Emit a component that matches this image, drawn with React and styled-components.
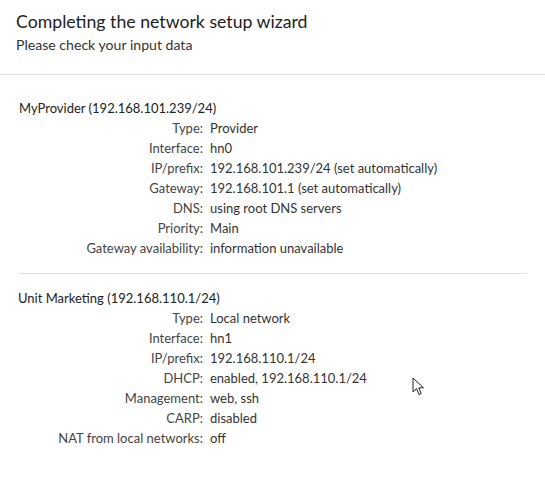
import React from "react";
import styled, { createGlobalStyle } from "styled-components";

const GlobalStyle = createGlobalStyle`
  html, body {
    margin: 0;
    padding: 0;
    background: #fff;
  }
  body {
    font-family: Lato, "Open Sans", sans-serif;
    color: #333;
  }
`;

const Page = styled.div`
  position: relative;
  width: 545px;
  height: 488px;
  overflow: hidden;
  background: #fff;
`;

const Header = styled.div`
  padding: 9px 16px 19px;
  border-bottom: 1px solid #e3e3e3;
`;

const Title = styled.h1`
  margin: 0;
  font-family: Lato, sans-serif;
  font-weight: 400;
  font-size: 17.7px;
  line-height: 26px;
  color: #222;
`;

const Subtitle = styled.div`
  font-size: 14.1px;
  line-height: 20px;
  color: #333;
`;

const Body = styled.div`
  padding: 23px 18px 0;
`;

const Section = styled.div`
  padding-bottom: 15px;
  & + & {
    border-top: 1px solid #e3e3e3;
    padding-top: 14px;
  }
`;

const SectionTitle = styled.div`
  font-size: 13px;
  line-height: 20px;
  color: #222;
  padding-left: ${(p) => p.$indent || 0}px;
`;

const Grid = styled.dl`
  margin: 0;
  display: grid;
  grid-template-columns: 185px 1fr;
  column-gap: 7px;
  font-size: 13px;
  line-height: 20px;
`;

const Label = styled.dt`
  text-align: right;
  color: #444;
`;

const Value = styled.dd`
  margin: 0;
  color: #333;
`;

const Cursor = styled.svg`
  position: absolute;
  left: 412px;
  top: 377px;
`;

const sections = [
  {
    title: "MyProvider (192.168.101.239/24)",
    indent: 1,
    rows: [
      ["Type:", "Provider"],
      ["Interface:", "hn0"],
      ["IP/prefix:", "192.168.101.239/24 (set automatically)"],
      ["Gateway:", "192.168.101.1 (set automatically)"],
      ["DNS:", "using root DNS servers"],
      ["Priority:", "Main"],
      ["Gateway availability:", "information unavailable"],
    ],
  },
  {
    title: "Unit Marketing (192.168.110.1/24)",
    rows: [
      ["Type:", "Local network"],
      ["Interface:", "hn1"],
      ["IP/prefix:", "192.168.110.1/24"],
      ["DHCP:", "enabled, 192.168.110.1/24"],
      ["Management:", "web, ssh"],
      ["CARP:", "disabled"],
      ["NAT from local networks:", "off"],
    ],
  },
];

export default function App() {
  return (
    <Page>
      <GlobalStyle />
      <Header>
        <Title>Completing the network setup wizard</Title>
        <Subtitle>Please check your input data</Subtitle>
      </Header>
      <Body>
        {sections.map((s) => (
          <Section key={s.title}>
            <SectionTitle $indent={s.indent}>{s.title}</SectionTitle>
            <Grid>
              {s.rows.map(([k, v]) => (
                <React.Fragment key={k}>
                  <Label>{k}</Label>
                  <Value>{v}</Value>
                </React.Fragment>
              ))}
            </Grid>
          </Section>
        ))}
      </Body>
      <Cursor width="13" height="20" viewBox="0 0 13 20">
        <path
          d="M1 1 L1 15 L4.5 11.5 L7 17.5 L9.2 16.6 L6.8 10.8 L11.5 10.8 Z"
          fill="#fff"
          stroke="#222"
          strokeWidth="1"
          strokeLinejoin="miter"
        />
      </Cursor>
    </Page>
  );
}
